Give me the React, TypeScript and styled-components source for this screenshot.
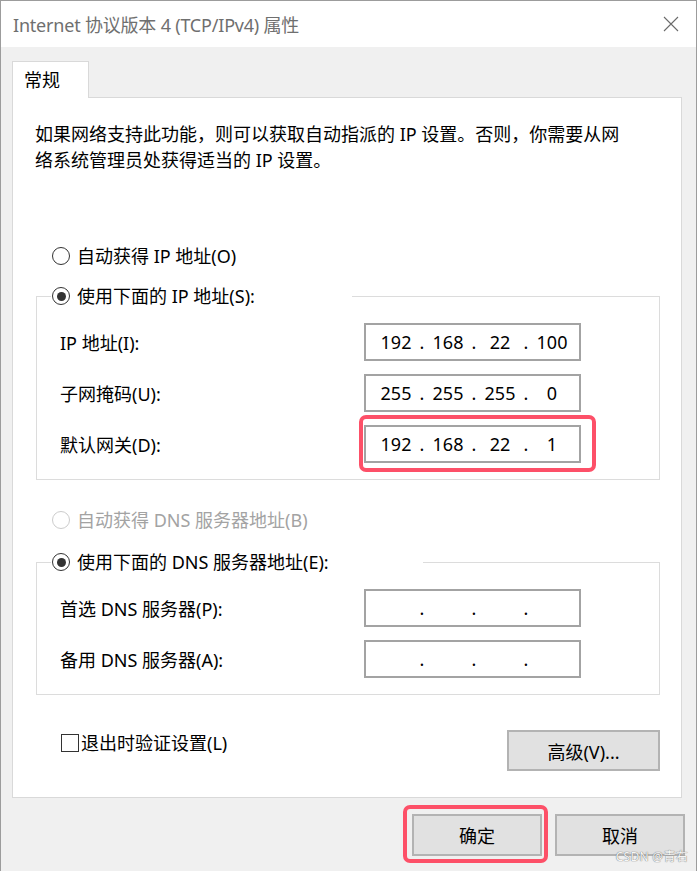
import React from "react";
import styled, { createGlobalStyle, css } from "styled-components";

const FONT = `"Noto Sans", "Noto Sans CJK SC", sans-serif`;

const GlobalStyle = createGlobalStyle`
  html, body { margin: 0; padding: 0; background: #f0f0f0; }
  body { font-family: ${FONT}; }
  * { box-sizing: border-box; }
`;

const Window = styled.div`
  position: relative;
  width: 697px;
  height: 871px;
  border: 1px solid #9c9c9c;
  border-bottom: none;
  background: #f0f0f0;
  display: flex;
  flex-direction: column;
  overflow: hidden;
  font-family: ${FONT};
  font-size: 18px;
  color: #000;
`;

const TitleBar = styled.div`
  height: 46px;
  flex: none;
  background: #fff;
  display: flex;
  align-items: center;
  justify-content: space-between;
  padding: 0 17px 0 12px;
`;

const Title = styled.div`
  font-size: 18px;
  color: #6f6f6f;
  letter-spacing: -0.2px;
`;

const CloseIcon = styled.svg`
  display: block;
  width: 16px;
  height: 16px;
`;

const Body = styled.div`
  flex: 1;
  display: flex;
  flex-direction: column;
  padding: 14px 14px 0 11px;
`;

const Tab = styled.div`
  position: relative;
  z-index: 1;
  width: 77px;
  height: 37px;
  margin-bottom: -1px;
  background: #fff;
  border: 1px solid #d9d9d9;
  border-bottom: none;
  padding-left: 11px;
  line-height: 36px;
  font-size: 18px;
`;

const Panel = styled.div`
  height: 701px;
  background: #fff;
  border: 1px solid #d9d9d9;
  padding: 23px 21px 0 22px;
  display: flex;
  flex-direction: column;
`;

const Description = styled.p`
  margin: 0;
  line-height: 26px;
  font-size: 18px;
`;

const RadioRow = styled.div<{ $top: number; $disabled?: boolean }>`
  display: flex;
  align-items: center;
  gap: 7px;
  height: 26px;
  margin-top: ${(p) => p.$top}px;
  margin-left: 17px;
  color: ${(p) => (p.$disabled ? "#a3a3a3" : "#000")};
  line-height: 26px;
  white-space: nowrap;
`;

const RadioCircle = styled.span<{ $checked?: boolean; $disabled?: boolean }>`
  position: relative;
  flex: none;
  width: 18px;
  height: 18px;
  border-radius: 50%;
  background: #fff;
  border: 1.5px solid ${(p) => (p.$disabled ? "#cccccc" : "#333")};
  ${(p) =>
    p.$checked &&
    css`
      &::after {
        content: "";
        position: absolute;
        left: 50%;
        top: 50%;
        width: 9px;
        height: 9px;
        margin: -4.5px 0 0 -4.5px;
        border-radius: 50%;
        background: #333;
      }
    `}
`;

const Group = styled.fieldset<{ $top: number }>`
  margin: ${(p) => p.$top}px 0 0 1px;
  border: 1px solid #dcdcdc;
  padding: 14px 0 16px 23px;
  min-width: 0;
  display: flex;
  flex-direction: column;
  gap: 13px;
`;

const GroupLegend = styled.legend<{ $width: number }>`
  width: ${(p) => p.$width}px;
  margin-left: -9px;
  padding: 0 0 0 1px;
  background: #fff;
`;

const LegendRadio = styled.div`
  display: flex;
  align-items: center;
  gap: 7px;
  height: 26px;
  line-height: 26px;
  white-space: nowrap;
`;

const FieldRow = styled.div`
  display: flex;
  align-items: center;
  height: 38px;
`;

const FieldLabel = styled.div`
  width: 304px;
  flex: none;
  white-space: nowrap;
`;

const IpWrap = styled.div<{ $highlight?: boolean }>`
  position: relative;
  ${(p) =>
    p.$highlight &&
    css`
      &::after {
        content: "";
        position: absolute;
        top: -10px;
        left: -5px;
        right: -15px;
        bottom: -9px;
        border: 4px solid #fd5068;
        border-radius: 7px;
        pointer-events: none;
      }
    `}
`;

const IpBox = styled.div`
  width: 217px;
  height: 38px;
  border: 2px solid #a3a3a3;
  background: #fff;
  display: flex;
  align-items: center;
  padding-left: 9px;
  font-size: 18px;
`;

const Octet = styled.span`
  width: 42px;
  text-align: center;
  line-height: 34px;
`;

const Dot = styled.span`
  width: 10px;
  text-align: center;
  line-height: 34px;
`;

const BottomRow = styled.div`
  margin-top: 35px;
  display: flex;
  justify-content: space-between;
  align-items: flex-start;
  padding-left: 26px;
`;

const CheckRow = styled.div`
  display: flex;
  align-items: center;
  gap: 2px;
  height: 26px;
  line-height: 26px;
`;

const CheckBox = styled.span`
  width: 18px;
  height: 18px;
  border: 1.5px solid #333;
  background: #fff;
  flex: none;
`;

const Button = styled.button<{ $w: number; $h: number; $highlight?: boolean }>`
  position: relative;
  width: ${(p) => p.$w}px;
  height: ${(p) => p.$h}px;
  background: #e1e1e1;
  border: 2px solid #b3b3b3;
  font-family: ${FONT};
  font-size: 18px;
  color: #000;
  padding: 0;
  ${(p) =>
    p.$highlight &&
    css`
      &::after {
        content: "";
        position: absolute;
        top: -11px;
        left: -11px;
        right: -8px;
        bottom: -9px;
        border: 4px solid #fd5068;
        border-radius: 7px;
        pointer-events: none;
      }
    `}
`;

const Footer = styled.div`
  display: flex;
  justify-content: flex-end;
  gap: 13px;
  padding-top: 16px;
  margin-right: -3px;
`;

const Watermark = styled.div`
  position: absolute;
  right: 8px;
  bottom: 6px;
  font-size: 12px;
  color: rgba(255, 255, 255, 0.95);
  text-shadow: 0 0 1px #7a7a7a, 0 0 1px #7a7a7a;
  letter-spacing: 0.3px;
`;

type IpProps = { parts?: string[]; highlight?: boolean };

const IpInput: React.FC<IpProps> = ({ parts = ["", "", "", ""], highlight }) => (
  <IpWrap $highlight={highlight}>
    <IpBox>
      {parts.map((part, i) => (
        <React.Fragment key={i}>
          <Octet>{part}</Octet>
          {i < 3 && <Dot>.</Dot>}
        </React.Fragment>
      ))}
    </IpBox>
  </IpWrap>
);

export default function App() {
  return (
    <>
      <GlobalStyle />
      <Window>
        <TitleBar>
          <Title>Internet 协议版本 4 (TCP/IPv4) 属性</Title>
          <CloseIcon viewBox="0 0 16 16">
            <path d="M1 1 L15 15 M15 1 L1 15" stroke="#6a6a6a" strokeWidth="1.1" fill="none" />
          </CloseIcon>
        </TitleBar>
        <Body>
          <Tab>常规</Tab>
          <Panel>
            <Description>
              如果网络支持此功能，则可以获取自动指派的 IP 设置。否则，你需要从网
              <br />
              络系统管理员处获得适当的 IP 设置。
            </Description>

            <RadioRow $top={70}>
              <RadioCircle />
              自动获得 IP 地址(O)
            </RadioRow>

            <Group $top={14}>
              <GroupLegend $width={301}>
                <LegendRadio>
                  <RadioCircle $checked />
                  使用下面的 IP 地址(S):
                </LegendRadio>
              </GroupLegend>
              <FieldRow>
                <FieldLabel>IP 地址(I):</FieldLabel>
                <IpInput parts={["192", "168", "22", "100"]} />
              </FieldRow>
              <FieldRow>
                <FieldLabel>子网掩码(U):</FieldLabel>
                <IpInput parts={["255", "255", "255", "0"]} />
              </FieldRow>
              <FieldRow>
                <FieldLabel>默认网关(D):</FieldLabel>
                <IpInput parts={["192", "168", "22", "1"]} highlight />
              </FieldRow>
            </Group>

            <RadioRow $top={27} $disabled>
              <RadioCircle $disabled />
              自动获得 DNS 服务器地址(B)
            </RadioRow>

            <Group $top={16}>
              <GroupLegend $width={372}>
                <LegendRadio>
                  <RadioCircle $checked />
                  使用下面的 DNS 服务器地址(E):
                </LegendRadio>
              </GroupLegend>
              <FieldRow>
                <FieldLabel>首选 DNS 服务器(P):</FieldLabel>
                <IpInput />
              </FieldRow>
              <FieldRow>
                <FieldLabel>备用 DNS 服务器(A):</FieldLabel>
                <IpInput />
              </FieldRow>
            </Group>

            <BottomRow>
              <CheckRow>
                <CheckBox />
                退出时验证设置(L)
              </CheckRow>
              <Button $w={153} $h={41}>高级(V)...</Button>
            </BottomRow>
          </Panel>
          <Footer>
            <Button $w={130} $h={42} $highlight>确定</Button>
            <Button $w={130} $h={42}>取消</Button>
          </Footer>
        </Body>
        <Watermark>CSDN @青右</Watermark>
      </Window>
    </>
  );
}
